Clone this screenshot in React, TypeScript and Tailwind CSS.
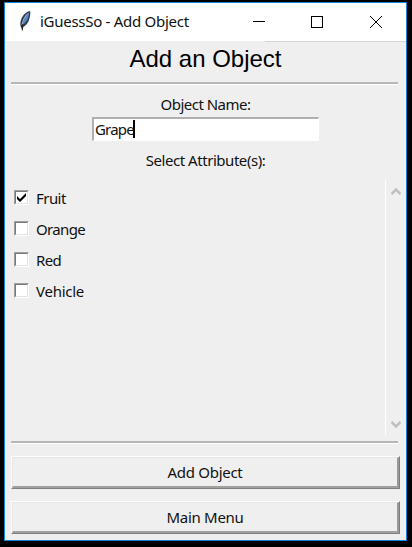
import React from "react";

const attributes = [
  { name: "Fruit", checked: true, spacing: "tracking-[-0.55px]" },
  { name: "Orange", checked: false, spacing: "tracking-[-0.65px]" },
  { name: "Red", checked: false, spacing: "tracking-[-0.65px]" },
  { name: "Vehicle", checked: false, spacing: "tracking-[-0.25px]" },
];

function Feather() {
  return (
    <svg width="13" height="22" viewBox="0 0 13 22" className="mt-[7px] ml-[14px] shrink-0">
      <path d="M11.200 1C8 1.500 4 4.500 2.300 9c-1 2.600-1.300 5-.7 7.500L3.300 20l1-3C6.700 15.700 9 13 10 10c1-3 1.500-6 1.200-9z" fill="#2f3b48" />
      <path d="M10.200 2.200C7.300 3.700 5 7 4 10.500c-.5 1.700-.6 3-.5 4.500C5.700 13.700 8 11 8.800 8.500c.7-2 1.300-4.300 1.400-6.300z" fill="#4f86c4" />
      <path d="M8.800 3.500C5.800 6.500 3.800 10 3 15" fill="none" stroke="#a9b8c6" strokeWidth=".9" />
      <path d="M3.800 14L3.300 20.500" stroke="#222" strokeWidth="1" />
    </svg>
  );
}

function TitleBar() {
  return (
    <div className="flex h-[38px] bg-white">
      <Feather />
      <span className="mt-[8px] ml-[8px] w-[205px] text-[15px] leading-5 tracking-[-0.28px] whitespace-nowrap">
        iGuessSo - Add Object
      </span>
      <svg width="140" height="38" viewBox="0 0 140 38" className="ml-[4px]" fill="none" stroke="#000" shapeRendering="crispEdges">
        <path d="M4 18.500h12M62.500 13.500h11v11h-11z" />
        <path d="M121 13l12 12M133 13l-12 12" shapeRendering="auto" />
      </svg>
    </div>
  );
}

function Rule() {
  return (
    <div className="mr-[8px] ml-[6px] h-[3px] shrink-0 border-t border-b border-t-[#b8b8b8] border-b-white bg-[#b4b4b4]" />
  );
}

function Check({ checked }: { checked: boolean }) {
  return (
    <span className="mb-[2px] block size-[15px] border-t border-r border-b border-l border-t-[#a0a0a0] border-r-white border-b-white border-l-[#a0a0a0]">
      <span className="block size-[13px] border border-t-[#787878] border-r-[#e3e3e3] border-b-[#e3e3e3] border-l-[#787878] bg-white">
        {checked && (
          <svg width="11" height="11" viewBox="0 0 11 11">
            <path d="M1 4v3l3 3 6-6V1L4 7z" fill="#000" />
          </svg>
        )}
      </span>
    </span>
  );
}

function Button({ children }: { children: React.ReactNode }) {
  return (
    <button className="mx-[6px] block h-[33px] border border-t-[#fdfdfd] border-r-[#7d7d7d] border-b-[#808080] border-l-[#fdfdfd]">
      <span className="block h-[31px] border-t border-r-2 border-b-2 border-l border-t-[#e6e6e6] border-r-[#999] border-b-[#a0a0a0] border-l-[#e6e6e6] text-[15px] leading-[28px] tracking-[-0.3px]">
        {children}
      </span>
    </button>
  );
}

export default function App() {
  return (
    <div className="h-[547px] w-[412px] bg-black pt-[2px] pl-[4px] font-['Noto_Sans','Open_Sans',sans-serif] text-[15px] text-[#111]">
      <main className="flex h-[539px] w-[403px] flex-col border border-[#1683d8] bg-[#efefef]">
        <TitleBar />
        <div className="ml-[260px] h-px shrink-0 bg-[#d5d5d5]" />
        <h1 className="h-[40px] shrink-0 text-center font-['Liberation_Sans',Arial,sans-serif] text-[24px] leading-[34px] text-black">
          Add an Object
        </h1>
        <Rule />
        <div className="mt-[8px] h-[24px] text-center leading-[22px] tracking-[-0.5px]">Object Name:</div>
        <div className="ml-[87px] flex h-[24px] w-[227px] shrink-0 border-t-2 border-r border-b border-l-2 border-t-[#b0b0b0] border-r-white border-b-white border-l-[#b0b0b0] bg-white pl-px">
          <span className="leading-[20px] tracking-[-0.8px]">Grape</span>
          <span className="mt-px -ml-px h-[18px] w-[2px] bg-black" />
        </div>
        <div className="mt-[8px] h-[31px] shrink-0 text-center leading-[22px] tracking-[-0.45px]">Select Attribute(s):</div>
        <div className="flex h-[255px] shrink-0">
          <div className="w-[380px] pt-[3px] pl-[9px]">
            {attributes.map((item) => (
              <label key={item.name} className="flex h-[31px] items-center gap-[7px]">
                <Check checked={item.checked} />
                <span className={item.spacing}>{item.name}</span>
              </label>
            ))}
          </div>
          <div className="flex flex-col justify-between border-l border-white pt-[7px] pb-[6px] pl-[5px]">
            <svg width="10" height="8" viewBox="0 0 10 8" fill="none" stroke="#bfbfbf" strokeWidth="2.500">
              <path d="M.5 7L5 2.500 9.500 7" />
            </svg>
            <svg width="10" height="8" viewBox="0 0 10 8" fill="none" stroke="#bfbfbf" strokeWidth="2.500">
              <path d="M.5 1L5 5.500 9.500 1" />
            </svg>
          </div>
        </div>
        <div className="h-[6px] shrink-0" />
        <Rule />
        <div className="mt-[12px] flex flex-col gap-[12px]">
          <Button>Add Object</Button>
          <Button>Main Menu</Button>
        </div>
      </main>
    </div>
  );
}
